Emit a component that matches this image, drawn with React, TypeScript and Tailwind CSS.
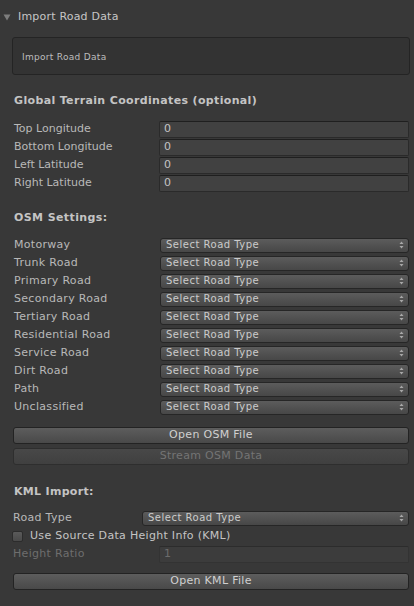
import React from "react";

const roads = [
  "Motorway",
  "Trunk Road",
  "Primary Road",
  "Secondary Road",
  "Tertiary Road",
  "Residential Road",
  "Service Road",
  "Dirt Road",
  "Path",
  "Unclassified",
];

const coords = ["Top Longitude", "Bottom Longitude", "Left Latitude", "Right Latitude"];

function Arrows() {
  return (
    <svg width="5" height="8" viewBox="0 0 5 8" className="shrink-0">
      <path d="M2.5 0.5 L4.5 3 L0.5 3 Z" fill="#a8a8a8" />
      <path d="M2.5 7.5 L4.5 5 L0.5 5 Z" fill="#a8a8a8" />
    </svg>
  );
}

function Dropdown({ className = "" }: { className?: string }) {
  return (
    <div
      className={`flex h-[15px] items-center justify-between rounded-[3px] border border-[#262626] bg-gradient-to-b from-[#5c5c5c] to-[#474747] pl-[5px] pr-[4px] text-[10px] tracking-[0.5px] text-[#cbcbcb] ${className}`}
    >
      <span className="leading-none">Select Road Type</span>
      <Arrows />
    </div>
  );
}

function TextField({ value, disabled = false }: { value: string; disabled?: boolean }) {
  return (
    <div
      className={`ml-[159px] flex h-[17px] w-[250px] items-center rounded-[2px] border pl-[4px] text-[11px] ${
        disabled
          ? "border-[#333333] border-t-[#2c2c2c] bg-[#3c3c3c] text-[#6c6c6c]"
          : "border-[#2a2a2a] border-t-[#1f1f1f] bg-[#414141] text-[#c4c4c4]"
      }`}
    >
      {value}
    </div>
  );
}

function Button({ label, disabled = false }: { label: string; disabled?: boolean }) {
  return (
    <div
      className={`ml-[13px] flex h-[17px] w-[396px] items-center justify-center rounded-[3px] border text-[11px] tracking-[0.3px] ${
        disabled
          ? "border-[#2e2e2e] bg-gradient-to-b from-[#484848] to-[#404040] text-[#747474]"
          : "border-[#232323] bg-gradient-to-b from-[#5d5d5d] to-[#494949] text-[#d0d0d0]"
      }`}
    >
      {label}
    </div>
  );
}

export default function App() {
  return (
    <div
      className="h-[606px] w-[414px] overflow-hidden bg-[#383838] text-[#b8b8b8]"
      style={{ fontFamily: '"DejaVu Sans", sans-serif' }}
    >
      <div className="flex h-[18px] mt-[8px] items-center pl-[3px] text-[11px] tracking-[0.2px] text-[#c6c6c6]">
        <svg width="8" height="8" viewBox="0 0 8 8" className="mr-[7px]">
          <path d="M0.5 1.5 L7.5 1.5 L4 7.5 Z" fill="#7d7d7d" />
        </svg>
        Import Road Data
      </div>

      <div className="mt-[11px] ml-[12px] flex h-[38px] w-[398px] items-center rounded-[3px] border border-[#242424] bg-[#333333] pl-[9px] pt-[3px] text-[9px] tracking-[0.3px] text-[#bdbdbd]">
        Import Road Data
      </div>

      <div className="mt-[17px] flex h-[18px] items-center pl-[14px] text-[11px] font-bold tracking-[0.35px] text-[#c4c4c4]">
        Global Terrain Coordinates (optional)
      </div>

      <div className="mt-[10px] flex flex-col">
        {coords.map((c) => (
          <div key={c} className="relative flex h-[18px] items-center text-[11px]">
            <span className="absolute left-[14px]">{c}</span>
            <TextField value="0" />
          </div>
        ))}
      </div>

      <div className="mt-[17px] flex h-[18px] items-center pl-[14px] text-[11px] font-bold tracking-[0.4px] text-[#c4c4c4]">
        OSM Settings:
      </div>

      <div className="mt-[9px] flex flex-col">
        {roads.map((r) => (
          <div key={r} className="flex h-[18px] items-center text-[11px] tracking-[0.3px]">
            <span className="w-[160px] shrink-0 pl-[14px]">{r}</span>
            <Dropdown className="w-[249px]" />
          </div>
        ))}
      </div>

      <div className="mt-[11px] flex flex-col gap-[4px]">
        <Button label="Open OSM File" />
        <Button label="Stream OSM Data" disabled />
      </div>

      <div className="mt-[18px] flex h-[18px] items-center pl-[14px] text-[11px] font-bold tracking-[0.3px] text-[#c4c4c4]">
        KML Import:
      </div>

      <div className="mt-[8px] flex h-[18px] items-center text-[11px] tracking-[0.3px]">
        <span className="w-[142px] shrink-0 pl-[13px]">Road Type</span>
        <Dropdown className="w-[267px]" />
      </div>
      <div className="flex h-[18px] items-center text-[11px] tracking-[0.3px] text-[#c4c4c4]">
        <div className="ml-[12px] mr-[7px] h-[11px] w-[11px] rounded-[2px] border border-[#2c2c2c] bg-gradient-to-b from-[#5a5a5a] to-[#4a4a4a]" />
        Use Source Data Height Info (KML)
      </div>
      <div className="relative flex h-[18px] items-center text-[11px] tracking-[0.3px] text-[#6e6e6e]">
        <span className="absolute left-[13px]">Height Ratio</span>
        <TextField value="1" disabled />
      </div>

      <div className="mt-[10px]">
        <Button label="Open KML File" />
      </div>
    </div>
  );
}
